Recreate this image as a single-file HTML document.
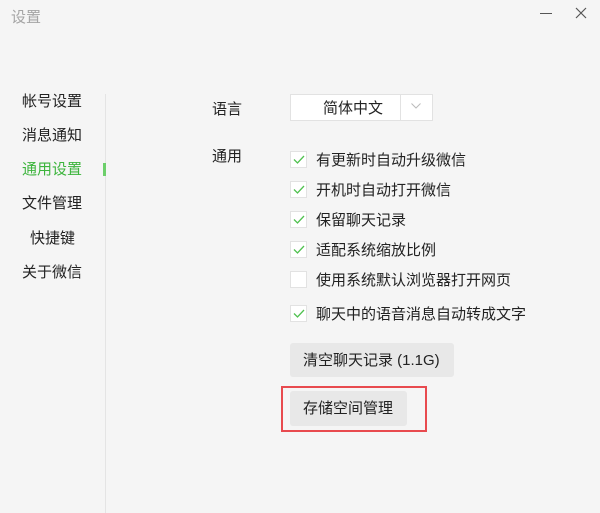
<!DOCTYPE html>
<html><head><meta charset="utf-8"><style>
*{margin:0;padding:0;box-sizing:border-box}
body{width:600px;height:513px;background:#f5f5f5;font-family:"Liberation Sans","Noto Sans CJK SC",sans-serif;position:relative;overflow:hidden;color:#222}
.a{position:absolute;white-space:nowrap}
.t{font-size:15px;line-height:18px}
.cb{position:absolute;left:290px;width:17px;height:17px;background:#fff;border:1px solid #e2e2e2}
.cb svg{position:absolute;left:2px;top:3px}
.lbl{position:absolute;left:316px;font-size:15px;line-height:18px}
.btn{position:absolute;left:290px;background:#e8e8e8;border-radius:3px;font-size:15px;line-height:36px;padding-left:13px}
</style></head><body>
<div class="a t" style="left:11px;top:9px;color:#a5a5a5">设置</div>
<div class="a" style="left:540px;top:13px;width:12px;height:1px;background:#555"></div>
<svg class="a" style="left:575px;top:7px" width="12" height="12"><path d="M1 1L11 11M11 1L1 11" stroke="#555" stroke-width="1.2"/></svg>
<div class="a" style="left:105px;top:94px;width:1px;height:419px;background:#e4e4e4"></div>
<div class="a" style="left:103px;top:163px;width:3px;height:13px;background:#6ccf6a"></div>
<div class="a t" style="left:22px;top:93px">帐号设置</div>
<div class="a t" style="left:22px;top:127px">消息通知</div>
<div class="a t" style="left:22px;top:161px;color:#3cb43c">通用设置</div>
<div class="a t" style="left:22px;top:195px">文件管理</div>
<div class="a t" style="left:30px;top:230px">快捷键</div>
<div class="a t" style="left:22px;top:264px">关于微信</div>
<div class="a t" style="left:212px;top:101px">语言</div>
<div class="a t" style="left:212px;top:148px">通用</div>
<div class="a" style="left:290px;top:94px;width:143px;height:27px;background:#fff;border:1px solid #e2e2e2"></div>
<div class="a" style="left:400px;top:95px;width:1px;height:25px;background:#e2e2e2"></div>
<div class="a t" style="left:323px;top:100px">简体中文</div>
<svg class="a" style="left:411px;top:103px" width="10" height="6"><path d="M0.5 0.5L5 5L9.5 0.5" stroke="#bbb" fill="none"/></svg>
<div class="cb" style="top:151px"><svg width="12" height="9"><path d="M1 4.5L4.5 8L11 1" stroke="#4fc14f" stroke-width="1.3" fill="none"/></svg></div>
<div class="lbl" style="top:152px">有更新时自动升级微信</div>
<div class="cb" style="top:181px"><svg width="12" height="9"><path d="M1 4.5L4.5 8L11 1" stroke="#4fc14f" stroke-width="1.3" fill="none"/></svg></div>
<div class="lbl" style="top:182px">开机时自动打开微信</div>
<div class="cb" style="top:211px"><svg width="12" height="9"><path d="M1 4.5L4.5 8L11 1" stroke="#4fc14f" stroke-width="1.3" fill="none"/></svg></div>
<div class="lbl" style="top:212px">保留聊天记录</div>
<div class="cb" style="top:241px"><svg width="12" height="9"><path d="M1 4.5L4.5 8L11 1" stroke="#4fc14f" stroke-width="1.3" fill="none"/></svg></div>
<div class="lbl" style="top:242px">适配系统缩放比例</div>
<div class="cb" style="top:271px"></div>
<div class="lbl" style="top:272px">使用系统默认浏览器打开网页</div>
<div class="cb" style="top:305px"><svg width="12" height="9"><path d="M1 4.5L4.5 8L11 1" stroke="#4fc14f" stroke-width="1.3" fill="none"/></svg></div>
<div class="lbl" style="top:306px">聊天中的语音消息自动转成文字</div>
<div class="btn" style="top:343px;width:164px;height:34px">清空聊天记录 (1.1G)</div>
<div class="btn" style="top:391px;width:117px;height:35px">存储空间管理</div>
<div class="a" style="left:281px;top:386px;width:146px;height:46px;border:2px solid #e84a4f"></div>
</body></html>
